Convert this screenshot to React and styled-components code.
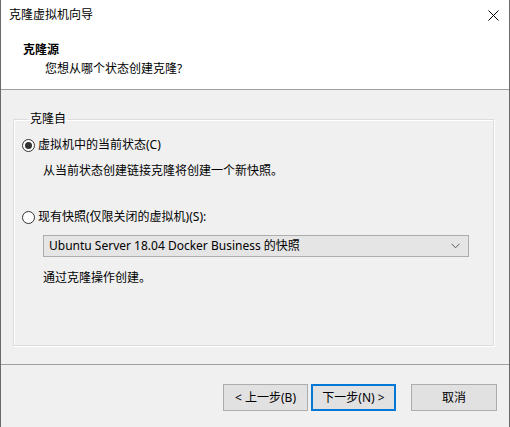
import React from 'react';
import styled, {createGlobalStyle} from 'styled-components';

const GlobalStyle = createGlobalStyle`
    html, body {
        margin: 0;
        padding: 0;
        background: #ffffff;
    }
    body {
        font-family: "Noto Sans", "Noto Sans CJK SC", sans-serif;
        font-size: 12px;
        color: #000;
    }
`;

const Window = styled.div`
    box-sizing: border-box;
    width: 510px;
    height: 427px;
    display: flex;
    flex-direction: column;
    border-left: 1px solid #6a6a6a;
    border-right: 1px solid #6a6a6a;
    background: #f0f0f0;
    overflow: hidden;
`;

const TitleBar = styled.div`
    height: 30px;
    flex: none;
    display: flex;
    align-items: center;
    justify-content: space-between;
    padding: 0 9px 0 8px;
    background: #fff;
    line-height: 16px;
`;

const CloseButton = styled.svg`
    width: 11px;
    height: 11px;
    margin-right: 1px;
`;

const Header = styled.div`
    box-sizing: border-box;
    height: 60px;
    flex: none;
    background: #fff;
    border-bottom: 1px solid #a0a0a0;
    padding-top: 12px;
    line-height: 16px;
`;

const HeaderTitle = styled.div`
    font-weight: bold;
    padding-left: 22px;
`;

const HeaderSub = styled.div`
    margin-top: 3px;
    padding-left: 44px;
`;

const Body = styled.div`
    flex: 1;
    padding: 21px 0 0 12px;
    line-height: 16px;
`;

const Group = styled.fieldset`
    box-sizing: border-box;
    width: 481px;
    height: 235px;
    margin: 0;
    padding: 0 0 0 8px;
    border: 1px solid #dcdcdc;
    box-shadow: inset 1px 1px 0 #fff, 1px 1px 0 #fff;
`;

const Legend = styled.legend`
    margin-left: 6px;
    padding: 0 2px;
    line-height: 16px;
`;

const RadioRow = styled.label`
    display: flex;
    align-items: center;
    gap: 3px;
    margin-top: ${p => p.$top}px;
    height: 16px;
`;

const RadioCircle = styled.span`
    box-sizing: border-box;
    width: 13px;
    height: 13px;
    border: 1px solid #333;
    border-radius: 50%;
    background: #fff;
    display: flex;
    align-items: center;
    justify-content: center;
    &::after {
        content: '';
        width: 7px;
        height: 7px;
        border-radius: 50%;
        background: ${p => (p.$checked ? '#333' : 'transparent')};
    }
`;

const Note = styled.div`
    margin-top: ${p => p.$top}px;
    padding-left: 21px;
`;

const Select = styled.div`
    box-sizing: border-box;
    margin: 10px 0 0 21px;
    width: 426px;
    height: 22px;
    display: flex;
    align-items: center;
    justify-content: space-between;
    padding: 0 8px 0 5px;
    background: #e5e5e5;
    border: 1px solid #adadad;
`;

const Chevron = styled.svg`
    width: 9px;
    height: 6px;
`;

const Footer = styled.div`
    box-sizing: border-box;
    height: 63px;
    flex: none;
    border-top: 1px solid #a0a0a0;
    padding: 19px 12px 0 0;
    display: flex;
    justify-content: flex-end;
    align-items: flex-start;
`;

const Button = styled.button`
    box-sizing: border-box;
    width: ${p => p.$width || 85}px;
    height: 27px;
    margin-left: ${p => p.$gap || 0}px;
    padding: 0;
    font: inherit;
    line-height: 16px;
    color: #000;
    background: #e1e1e1;
    border: ${p => (p.$primary ? '2px solid #0078d7' : '1px solid #adadad')};
`;

export default function App() {
    return (
        <Window>
            <GlobalStyle />
            <TitleBar>
                <span>克隆虚拟机向导</span>
                <CloseButton viewBox='0 0 11 11'>
                    <path d='M0.5 0.5 L10.5 10.5 M10.5 0.5 L0.5 10.5' stroke='#000' strokeWidth='1' fill='none' />
                </CloseButton>
            </TitleBar>
            <Header>
                <HeaderTitle>克隆源</HeaderTitle>
                <HeaderSub>您想从哪个状态创建克隆?</HeaderSub>
            </Header>
            <Body>
                <Group>
                    <Legend>克隆自</Legend>
                    <RadioRow $top={10}>
                        <RadioCircle $checked />
                        <span>虚拟机中的当前状态(C)</span>
                    </RadioRow>
                    <Note $top={10}>从当前状态创建链接克隆将创建一个新快照。</Note>
                    <RadioRow $top={30}>
                        <RadioCircle />
                        <span>现有快照(仅限关闭的虚拟机)(S):</span>
                    </RadioRow>
                    <Select>
                        <span>Ubuntu Server 18.04 Docker Business 的快照</span>
                        <Chevron viewBox='0 0 9 6'>
                            <path d='M0.5 0.8 L4.5 4.8 L8.5 0.8' stroke='#555' strokeWidth='1' fill='none' />
                        </Chevron>
                    </Select>
                    <Note $top={13}>通过克隆操作创建。</Note>
                </Group>
            </Body>
            <Footer>
                <Button>&lt; 上一步(B)</Button>
                <Button $primary $gap={3}>下一步(N) &gt;</Button>
                <Button $gap={15} $width={86}>取消</Button>
            </Footer>
        </Window>
    );
}
